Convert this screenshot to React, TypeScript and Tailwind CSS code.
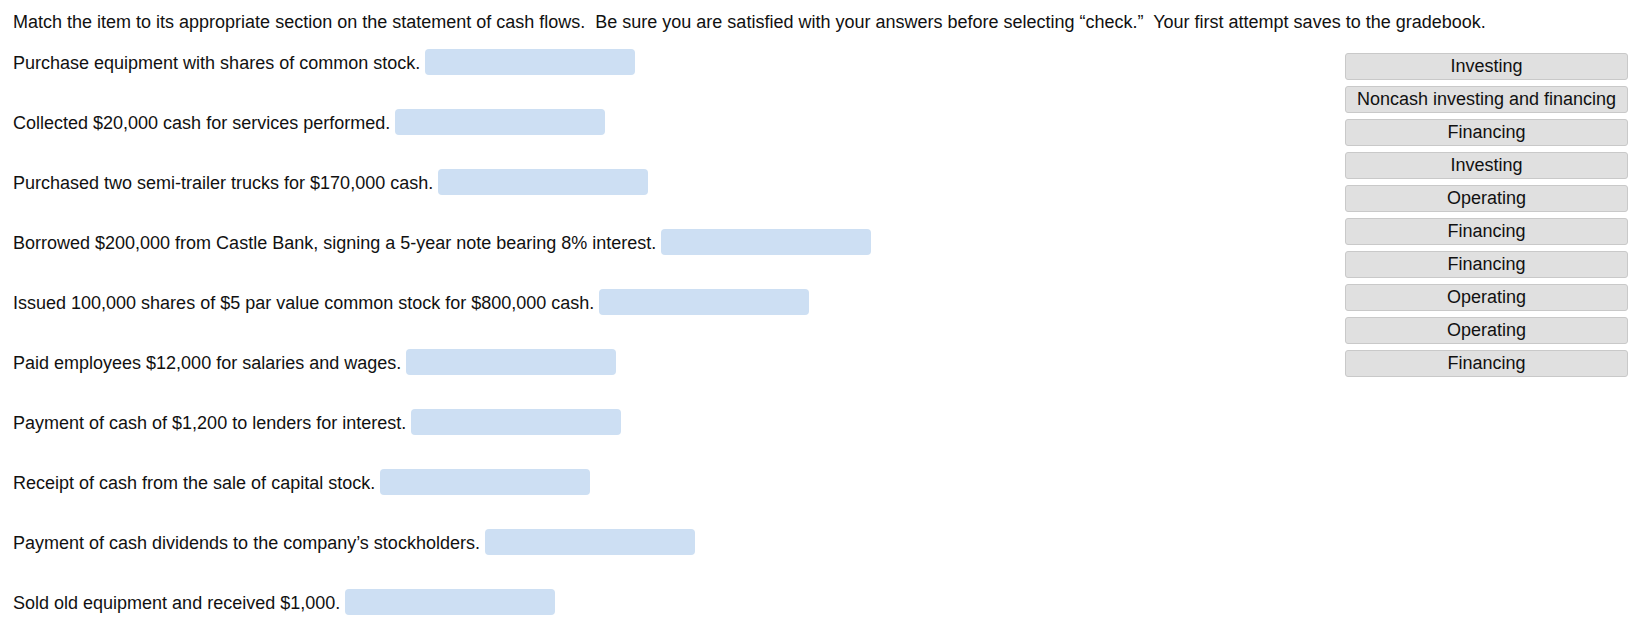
import React from "react";

const items = [
  "Purchase equipment with shares of common stock.",
  "Collected $20,000 cash for services performed.",
  "Purchased two semi-trailer trucks for $170,000 cash.",
  "Borrowed $200,000 from Castle Bank, signing a 5-year note bearing 8% interest.",
  "Issued 100,000 shares of $5 par value common stock for $800,000 cash.",
  "Paid employees $12,000 for salaries and wages.",
  "Payment of cash of $1,200 to lenders for interest.",
  "Receipt of cash from the sale of capital stock.",
  "Payment of cash dividends to the company\u2019s stockholders.",
  "Sold old equipment and received $1,000.",
];

const choices = [
  "Investing",
  "Noncash investing and financing",
  "Financing",
  "Investing",
  "Operating",
  "Financing",
  "Financing",
  "Operating",
  "Operating",
  "Financing",
];

export default function App() {
  return (
    <div
      className="w-[1642px] h-[634px] bg-white text-[#111] text-[18px] overflow-hidden"
      style={{ fontFamily: '"Liberation Sans", Arial, Helvetica, sans-serif' }}
    >
      <p className="pl-[13px] pt-[12px] leading-[21px]">
        Match the item to its appropriate section on the statement of cash flows.&nbsp; Be sure you are satisfied with your answers before selecting “check.”&nbsp; Your first attempt saves to the gradebook.
      </p>
      <div className="flex">
        <div className="flex-1 pl-[13px] pt-[16px] flex flex-col gap-[34px]">
          {items.map((t, i) => (
            <div key={i} className="flex items-center h-[26px] gap-[5px]">
              <span className="leading-[21px] pt-[2px]">{t}</span>
              <div className="w-[210px] h-[26px] rounded-[4px] bg-[#cddff3]" />
            </div>
          ))}
        </div>
        <div className="w-[283px] mr-[14px] pt-[20px] flex flex-col gap-[6px]">
          {choices.map((c, i) => (
            <div
              key={i}
              className="h-[27px] rounded-[3px] bg-[#e0e0e0] border border-[#c9c9c9] flex items-center justify-center leading-[21px] text-[#111]"
            >
              {c}
            </div>
          ))}
        </div>
      </div>
    </div>
  );
}
